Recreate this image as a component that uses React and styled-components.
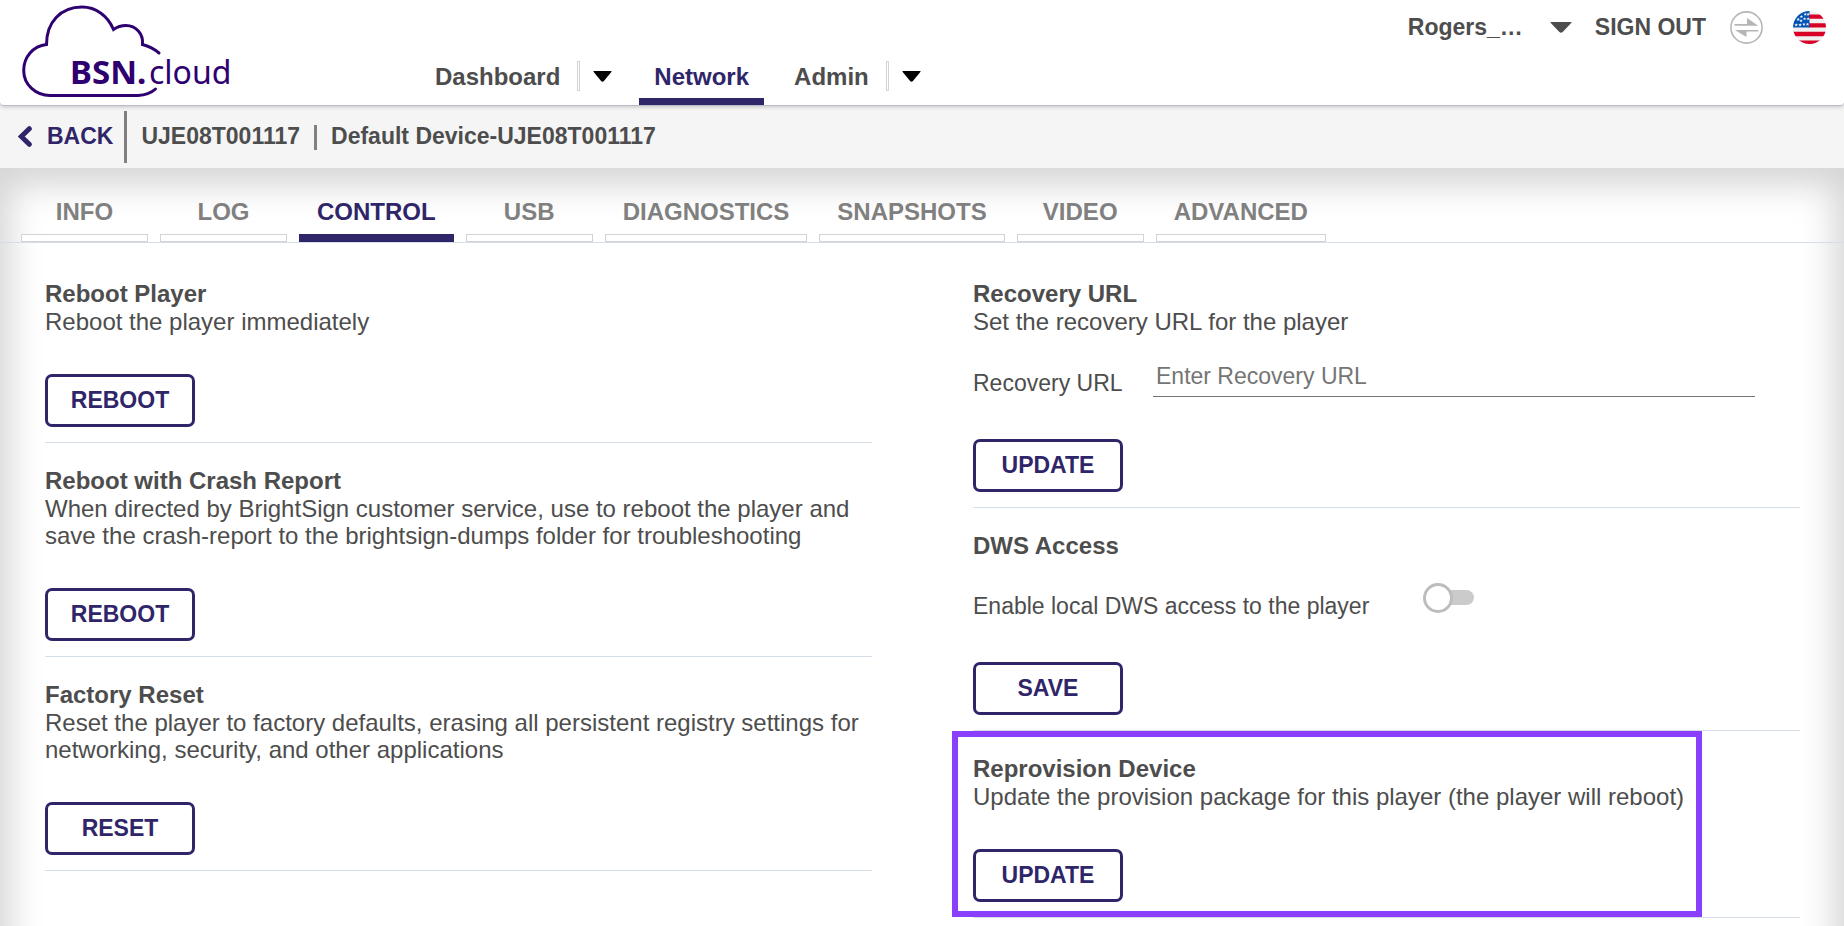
import React from "react";
import styled, { createGlobalStyle, css } from "styled-components";

const color = {
  text: "#4d4d4d",
  muted: "#808080",
  brand: "#2f2569",
  logo: "#2e0070",
  line: "#d5dde9",
  box: "#d3d3d6",
  highlight: "#8a3ffc",
};

const GlobalStyle = createGlobalStyle`
  *, *::before, *::after { box-sizing: border-box; }
  body {
    margin: 0;
    background: #fff;
    color: ${color.text};
    font-family: "Liberation Sans", Arial, sans-serif;
    font-size: 24px;
    line-height: 27px;
  }
  h1, h2, p { margin: 0; }
  button, input { font-family: inherit; }
`;

const Page = styled.div`
  display: flex;
  flex-direction: column;
  min-height: 100vh;
`;

/* ---------- header ---------- */

const Header = styled.header`
  position: relative;
  display: flex;
  align-items: stretch;
  height: 106px;
  padding: 0 18px 0 22px;
  background: #fff;
  border-bottom: 1px solid #b9bcc9;
  border-radius: 0 0 4px 4px;
  box-shadow: 0 1px 4px rgba(0, 0, 0, 0.2);
`;

const HeaderBack = styled.div`
  background: #f5f5f5;
`;

const LogoLink = styled.a`
  flex: none;
  width: 208px;
  padding-top: 4px;

  svg { display: block; }
`;

const MainNav = styled.nav`
  display: flex;
  align-items: stretch;
  margin-left: 190px;
`;

const NavLink = styled.a`
  display: flex;
  align-items: flex-end;
  padding: 0 15px 15px;
  color: ${color.text};
  font-weight: 700;
  text-decoration: none;
  ${(p) =>
    p.$active &&
    css`
      padding-bottom: 8px;
      color: ${color.brand};
      border-bottom: 7px solid ${color.brand};
    `}

  & + & { margin-left: 15px; }
`;

const NavMenuButton = styled.button`
  align-self: flex-end;
  display: flex;
  align-items: center;
  gap: 13px;
  height: 30px;
  margin: 0 27px 14px 2px;
  padding: 0;
  border: 0;
  background: none;
  color: #000;

  &::before {
    content: "";
    width: 3px;
    height: 30px;
    border: 1px solid ${color.box};
  }
`;

const Account = styled.div`
  display: flex;
  align-items: center;
  align-self: flex-start;
  height: 33px;
  margin: 11px 0 0 auto;
  font-size: 23px;
  font-weight: 700;
`;

const UserButton = styled.button`
  display: flex;
  align-items: center;
  gap: 27px;
  padding: 0;
  border: 0;
  background: none;
  color: inherit;
  font-size: inherit;
  font-weight: inherit;
  line-height: inherit;
`;

const SignOut = styled.a`
  margin: 0 24px 0 23px;
  color: inherit;
  text-decoration: none;
`;

const IconButton = styled.button`
  display: block;
  padding: 0;
  border: 0;
  background: none;
  & + & { margin-left: 30px; }
  svg { display: block; }
`;

/* ---------- device bar ---------- */

const DeviceBar = styled.div`
  display: flex;
  align-items: center;
  height: 62px;
  padding: 0 18px;
  background: #f5f5f5;
  font-size: 23px;
  font-weight: 700;
`;

const BackLink = styled.a`
  display: flex;
  align-items: center;
  gap: 15px;
  padding-bottom: 2px;
  color: ${color.brand};
  text-decoration: none;
`;

const BarRule = styled.span`
  width: 3px;
  height: ${(p) => (p.$tall ? 52 : 25)}px;
  margin: 0 14px 0 ${(p) => (p.$tall ? 11 : 14)}px;
  background: ${color.muted};
`;

const DeviceText = styled.h1`
  padding-bottom: 2px;
  font-size: 23px;
  line-height: 27px;
`;

/* ---------- panel and tabs ---------- */

/* The shade runs past the clipped bottom edge, so it shows on three sides only. */
const Panel = styled.main`
  position: relative;
  flex: 1;
  isolation: isolate;
  overflow: hidden;
  background: #fff;

  &::before {
    content: "";
    position: absolute;
    z-index: -1;
    inset: 0 0 -60px;
    box-shadow: inset 0 7px 34px 10px rgba(0, 0, 0, 0.17);
  }
`;

const Tabs = styled.nav`
  display: flex;
  gap: 12px;
  padding: 30px 21px 0;
  border-bottom: 1px solid ${color.line};
`;

const Tab = styled.button`
  min-width: 127px;
  padding: 0;
  border: 0;
  background: none;
  color: ${(p) => (p.$active ? color.brand : color.muted)};
  font-size: 24px;
  font-weight: 700;
  line-height: 28px;

  span {
    display: block;
    padding: 0 18px 8px;
  }

  &::after {
    content: "";
    display: block;
    height: 8px;
    border: 1px solid ${(p) => (p.$active ? color.brand : color.box)};
    background: ${(p) => (p.$active ? color.brand : "#fff")};
  }
`;

const Columns = styled.div`
  display: grid;
  grid-template-columns: 1fr 1fr;
  align-items: start;
  gap: 101px;
  padding: 13px 44px 0 45px;
`;

/* ---------- control sections ---------- */

const Section = styled.section`
  padding: ${(p) => (p.$flush ? "0" : "24px 0 15px")};
  border-bottom: 1px solid ${color.line};
`;

const Highlight = styled.div`
  width: fit-content;
  margin-left: -21px;
  padding: 18px 12px 9px 15px;
  border: 6px solid ${color.highlight};
`;

const Title = styled.h2`
  font-size: 24px;
  line-height: 28px;
`;

const ActionButton = styled.button`
  display: block;
  min-width: 150px;
  height: 53px;
  margin-top: ${(p) => (p.$afterField ? 42 : 39)}px;
  padding: 0 20px;
  border: 3px solid ${color.brand};
  border-radius: 7px;
  background: #fff;
  color: ${color.brand};
  font-size: 23px;
  font-weight: 700;
  line-height: 27px;
`;

const Field = styled.div`
  display: flex;
  align-items: flex-end;
  margin-top: 28px;
  padding-right: 45px;
  font-size: 23px;
`;

const ToggleField = styled(Field)`
  height: 37px;
  margin-top: 23px;
`;

const FieldLabel = styled.label`
  flex: none;
  width: ${(p) => (p.$wide ? 450 : 180)}px;
`;

const TextInput = styled.input`
  flex: 1;
  min-width: 0;
  height: 34px;
  padding: 0 3px 6px;
  border: 0;
  border-bottom: 1px solid #757575;
  border-radius: 0;
  background: transparent;
  color: ${color.text};
  font-size: 23px;
  line-height: 27px;
  outline: 0;
  &::placeholder { color: #757575; opacity: 1; }
`;

const Toggle = styled.input`
  position: relative;
  align-self: flex-start;
  appearance: none;
  width: 51px;
  height: 30px;
  margin: 0;

  &::before {
    content: "";
    position: absolute;
    inset: 7px 0 8px 6px;
    border-radius: 8px;
    background: #cbcbcb;
  }
  &::after {
    content: "";
    position: absolute;
    top: 0;
    left: 0;
    width: 30px;
    height: 30px;
    border: 3px solid #bdbdbd;
    border-radius: 50%;
    background: #fff;
  }
  &:checked::after { left: 21px; border-color: ${color.brand}; }
`;

/* ---------- drawings ---------- */

const Logo = () => (
  <svg width="212" height="96" viewBox="22 4 212 96" role="img" aria-label="BSN.cloud">
    <path
      d="M159 53 Q152 47 142.500 44.500 C143.500 34 136 25.500 126 25.500 Q119 25.500 113.500 29.500 C108 16 96 7 82 7 C61 7 46.500 22 46.500 44.500 C33 46 23.700 57 23.700 70.500 C23.700 85 36 95.500 50 95.500 H138 Q149 95 155.500 89"
      fill="none"
      stroke={color.logo}
      strokeWidth="3"
      strokeLinecap="round"
    />
    <g fill={color.logo} fontFamily="'Noto Sans', 'Open Sans', sans-serif">
      <text x="70" y="84" fontSize="33" fontWeight="700">BSN.</text>
      <text x="149" y="84" fontSize="32">cloud</text>
    </g>
  </svg>
);

const Caret = ({ width, height }) => (
  <svg width={width} height={height} viewBox="0 0 20 11" preserveAspectRatio="none" aria-hidden="true">
    <path d="M1 0 H19 Q20 0 19.300 1 L11.500 10 Q10 11.500 8.500 10 L0.700 1 Q0 0 1 0Z" fill="currentColor" />
  </svg>
);

const Chevron = () => (
  <svg width="14" height="21" viewBox="0 0 14 21" aria-hidden="true">
    <path d="M11.300 2.700 L3.300 10.500 L11.300 18.300" fill="none" stroke="currentColor" strokeWidth="5" strokeLinecap="round" />
  </svg>
);

const TransferIcon = () => (
  <svg width="33" height="33" viewBox="0 0 33 33" aria-hidden="true">
    <circle cx="16.500" cy="16.500" r="15.600" fill="none" stroke="#b5b5b5" strokeWidth="1.600" />
    <path d="M4.500 13 H17 V7 L28.300 14.700 H4.500Z M28.300 20.500 H16.500 V26 L4.800 19 H28.300Z" fill="#b5b5b5" />
  </svg>
);

const STARS = [
  [190, 50], [235, 50], [130, 85], [180, 120], [235, 120],
  [80, 130], [125, 150], [50, 215], [110, 215], [170, 205], [225, 205],
];

const FlagIcon = () => (
  <svg width="33" height="33" viewBox="0 0 512 512" aria-hidden="true">
    <clipPath id="flag-circle"><circle cx="256" cy="256" r="256" /></clipPath>
    <g clipPath="url(#flag-circle)">
      <rect width="512" height="512" fill="#f0f0f0" />
      <path d="M245 56H512v66H245zM245 189H512v67H245zM0 323H512v67H0zM0 456H512v56H0z" fill="#d80027" />
      <rect width="256" height="256" fill="#0052b4" />
      {STARS.map(([x, y]) => (
        <path
          key={`${x}-${y}`}
          transform={`translate(${x} ${y})`}
          d="M0-28 7-8H28L12 5 18 25 0 13-18 25-12 5-28-8H-7Z"
          fill="#f0f0f0"
        />
      ))}
    </g>
  </svg>
);

/* ---------- page ---------- */

const TABS = ["INFO", "LOG", "CONTROL", "USB", "DIAGNOSTICS", "SNAPSHOTS", "VIDEO", "ADVANCED"];

const ACTIONS = [
  { title: "Reboot Player", text: "Reboot the player immediately", action: "REBOOT" },
  {
    title: "Reboot with Crash Report",
    text: "When directed by BrightSign customer service, use to reboot the player and save the crash-report to the brightsign-dumps folder for troubleshooting",
    action: "REBOOT",
  },
  {
    title: "Factory Reset",
    text: "Reset the player to factory defaults, erasing all persistent registry settings for networking, security, and other applications",
    action: "RESET",
  },
];

export default function App() {
  return (
    <Page>
      <GlobalStyle />
      <HeaderBack>
        <Header>
          <LogoLink href="#home"><Logo /></LogoLink>
          <MainNav>
            <NavLink href="#dashboard">Dashboard</NavLink>
            <NavMenuButton aria-label="Dashboard menu"><Caret width={19} height={11} /></NavMenuButton>
            <NavLink href="#network" $active>Network</NavLink>
            <NavLink href="#admin">Admin</NavLink>
            <NavMenuButton aria-label="Admin menu"><Caret width={19} height={11} /></NavMenuButton>
          </MainNav>
          <Account>
            <UserButton>
              Rogers_…
              <Caret width={22} height={11} />
            </UserButton>
            <SignOut href="#sign-out">SIGN OUT</SignOut>
            <IconButton aria-label="Switch network"><TransferIcon /></IconButton>
            <IconButton aria-label="Language"><FlagIcon /></IconButton>
          </Account>
        </Header>
      </HeaderBack>

      <DeviceBar>
        <BackLink href="#back"><Chevron />BACK</BackLink>
        <BarRule $tall />
        <DeviceText>UJE08T001117</DeviceText>
        <BarRule />
        <DeviceText as="p">Default Device-UJE08T001117</DeviceText>
      </DeviceBar>

      <Panel>
        <Tabs>
          {TABS.map((name) => (
            <Tab key={name} $active={name === "CONTROL"}><span>{name}</span></Tab>
          ))}
        </Tabs>

        <Columns>
          <div>
            {ACTIONS.map(({ title, text, action }) => (
              <Section key={title}>
                <Title>{title}</Title>
                <p>{text}</p>
                <ActionButton>{action}</ActionButton>
              </Section>
            ))}
          </div>

          <div>
            <Section>
              <Title>Recovery URL</Title>
              <p>Set the recovery URL for the player</p>
              <Field>
                <FieldLabel htmlFor="recovery-url">Recovery URL</FieldLabel>
                <TextInput id="recovery-url" type="text" placeholder="Enter Recovery URL" />
              </Field>
              <ActionButton $afterField>UPDATE</ActionButton>
            </Section>

            <Section>
              <Title>DWS Access</Title>
              <ToggleField>
                <FieldLabel htmlFor="dws-access" $wide>Enable local DWS access to the player</FieldLabel>
                <Toggle id="dws-access" type="checkbox" role="switch" />
              </ToggleField>
              <ActionButton $afterField>SAVE</ActionButton>
            </Section>

            <Section $flush>
              <Highlight>
                <Title>Reprovision Device</Title>
                <p>Update the provision package for this player (the player will reboot)</p>
                <ActionButton>UPDATE</ActionButton>
              </Highlight>
            </Section>
          </div>
        </Columns>
      </Panel>
    </Page>
  );
}
